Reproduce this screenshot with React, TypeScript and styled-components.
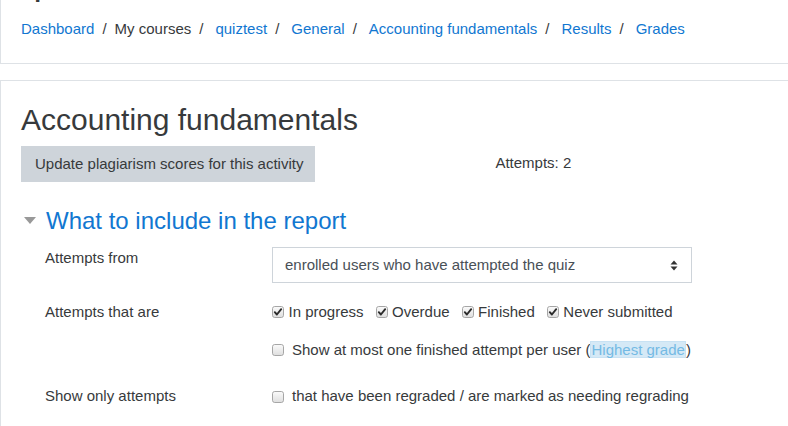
import React, { ReactNode } from 'react'
import styled, { createGlobalStyle } from 'styled-components'

const GlobalStyle = createGlobalStyle`
  html, body {
    margin: 0;
    padding: 0;
    background: #fff;
    overflow: hidden;
  }
  body {
    font-family: "Liberation Sans", Arial, sans-serif;
    font-size: 15px;
    line-height: 1.5;
    color: #373a3c;
  }
`

const Page = styled.div`
  width: 788px;
  margin-top: -62px;
`

const Card = styled.div<{ $gap?: number }>`
  width: 1100px;
  border: 1px solid #dee2e6;
  background: #fff;
  margin-bottom: ${(p) => p.$gap ?? 0}px;
`

const HeaderBody = styled.div`
  padding: 20px 20px 22.5px;
`

const PageTitle = styled.h1`
  margin: 0 0 13.5px;
  font-size: 37.5px;
  font-weight: 400;
  line-height: 1.2;
`

const Crumbs = styled.nav`
  display: flex;
  align-items: center;
  white-space: nowrap;
`

const Crumb = styled.a<{ $plain?: boolean; $spaced?: boolean }>`
  color: ${(p) => (p.$plain ? '#373a3c' : '#1177d1')};
  text-decoration: none;
  margin-left: ${(p) => (p.$spaced ? 4 : 0)}px;
`

const Sep = styled.span`
  padding: 0 8px;
  color: #373a3c;
`

const MainBody = styled.div`
  padding: 21px 20px 20px;
`

const Heading = styled.h2`
  margin: 0 0 8px;
  font-size: 30px;
  font-weight: 400;
  line-height: 1.2;
`

const ActionRow = styled.div`
  display: flex;
  align-items: center;
`

const Button = styled.button`
  font-family: inherit;
  font-size: 15px;
  line-height: 24px;
  color: #373a3c;
  background: #ced4da;
  border: 0;
  border-radius: 0;
  padding: 6px 12px 6px 14px;
`

const Counts = styled.div`
  margin-left: 180px;
`

const Legend = styled.div`
  display: flex;
  align-items: center;
  margin: 25px 0 12px;
`

const Caret = styled.span`
  width: 0;
  height: 0;
  border-left: 6px solid transparent;
  border-right: 6px solid transparent;
  border-top: 7px solid #999;
  margin: 0 10px 0 3px;
`

const LegendText = styled.span`
  font-size: 24px;
  line-height: 1.2;
  color: #1177d1;
`

const FormRow = styled.div<{ $mb: number }>`
  display: grid;
  grid-template-columns: 227px 1fr;
  padding-left: 24px;
  margin-bottom: ${(p) => p.$mb}px;
`

const Label = styled.div`
  line-height: 22.5px;
`

const Controls = styled.div`
  display: flex;
  flex-direction: column;
  gap: 15.5px;
`

const SelectBox = styled.div`
  box-sizing: border-box;
  width: 420px;
  height: 36px;
  display: flex;
  align-items: center;
  justify-content: space-between;
  padding: 0 13px 0 12px;
  border: 1px solid #ced4da;
  color: #495057;
`

const CheckLine = styled.div`
  display: flex;
  align-items: center;
  line-height: 22.5px;
  white-space: nowrap;
`

const CheckItem = styled.label<{ $wide?: boolean }>`
  display: flex;
  align-items: center;
  margin-right: 12px;

  & > svg {
    margin-right: ${(p) => (p.$wide ? 8 : 4.5)}px;
  }
`

const Highlight = styled.span`
  background: #d5e9f6;
  color: #74bae4;
  box-shadow: inset 0 0 0 1px #c8e2f3;
  padding: 0 1px;
`

const Box = ({ checked }: { checked?: boolean }) => (
  <svg width="12" height="12" viewBox="0 0 12 12">
    <defs>
      <linearGradient id="cbg" x1="0" y1="0" x2="0" y2="1">
        <stop offset="0" stopColor="#fbfbfb" />
        <stop offset="1" stopColor="#dedede" />
      </linearGradient>
    </defs>
    <rect x="0.5" y="0.5" width="11" height="11" rx="2.2" fill="url(#cbg)" stroke="#a6a6a6" />
    {checked && (
      <path d="M2.8 6.2 L4.9 8.5 L9.2 3.2" fill="none" stroke="#2b2b2b" strokeWidth="1.9" strokeLinecap="round" strokeLinejoin="round" />
    )}
  </svg>
)

const Check = ({ checked, wide, children }: { checked?: boolean; wide?: boolean; children: ReactNode }) => (
  <CheckItem $wide={wide}>
    <Box checked={checked} />
    <span>{children}</span>
  </CheckItem>
)

const Arrows = () => (
  <svg width="8" height="11" viewBox="0 0 8 11">
    <path d="M4 0.5 L7.5 4.5 H0.5 Z" fill="#333" />
    <path d="M4 10.5 L7.5 6.5 H0.5 Z" fill="#333" />
  </svg>
)

const App = (): JSX.Element => (
  <Page>
    <GlobalStyle />
    <Card $gap={16}>
      <HeaderBody>
        <PageTitle>quiztest</PageTitle>
        <Crumbs>
          <Crumb href="#">Dashboard</Crumb>
          <Sep>/</Sep>
          <Crumb $plain>My courses</Crumb>
          <Sep>/</Sep>
          <Crumb href="#" $spaced>quiztest</Crumb>
          <Sep>/</Sep>
          <Crumb href="#" $spaced>General</Crumb>
          <Sep>/</Sep>
          <Crumb href="#" $spaced>Accounting fundamentals</Crumb>
          <Sep>/</Sep>
          <Crumb href="#" $spaced>Results</Crumb>
          <Sep>/</Sep>
          <Crumb href="#" $spaced>Grades</Crumb>
        </Crumbs>
      </HeaderBody>
    </Card>
    <Card>
      <MainBody>
        <Heading>Accounting fundamentals</Heading>
        <ActionRow>
          <Button>Update plagiarism scores for this activity</Button>
          <Counts>Attempts: 2</Counts>
        </ActionRow>
        <Legend>
          <Caret />
          <LegendText>What to include in the report</LegendText>
        </Legend>
        <FormRow $mb={17.5}>
          <Label>Attempts from</Label>
          <SelectBox>
            <span>enrolled users who have attempted the quiz</span>
            <Arrows />
          </SelectBox>
        </FormRow>
        <FormRow $mb={24}>
          <Label>Attempts that are</Label>
          <Controls>
            <CheckLine>
              <Check checked>In progress</Check>
              <Check checked>Overdue</Check>
              <Check checked>Finished</Check>
              <Check checked>Never submitted</Check>
            </CheckLine>
            <CheckLine>
              <Check wide>
                Show at most one finished attempt per user (<Highlight>Highest grade</Highlight>)
              </Check>
            </CheckLine>
          </Controls>
        </FormRow>
        <FormRow $mb={20}>
          <Label>Show only attempts</Label>
          <CheckLine>
            <Check wide>that have been regraded / are marked as needing regrading</Check>
          </CheckLine>
        </FormRow>
      </MainBody>
    </Card>
  </Page>
)

export default App
